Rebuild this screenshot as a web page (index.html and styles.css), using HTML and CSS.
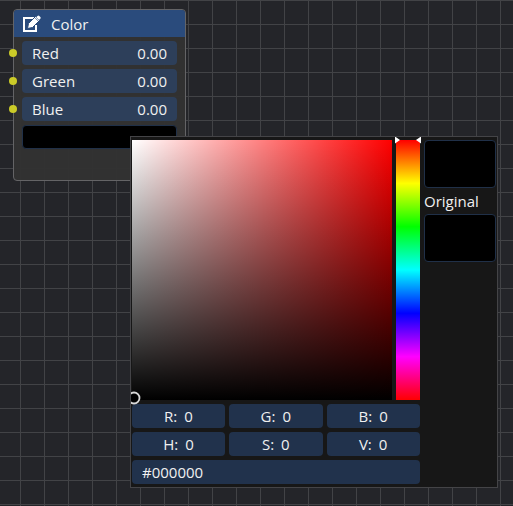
FILE: index.html
```html
<!DOCTYPE html>
<html lang="en">
<head>
<meta charset="utf-8">
<title>Color node</title>
<link rel="stylesheet" href="styles.css">
</head>
<body>
<main class="canvas">
  <section class="node">
    <header class="node-header">
      <svg class="node-icon" viewBox="0 0 18 18" aria-hidden="true">
        <path d="M11 3H1V16H13V10" fill="none" stroke="#fff" stroke-width="2"/>
        <path d="M4.500 13.500l1-5 7-7 4 4-7 7z" fill="#fff" stroke="#2a4b7c" stroke-width="1"/>
        <path d="M13.200 2.200l1.300-1.300q.9-.8 1.800 0l1 1q.8.9 0 1.800L16 5z" fill="#fff"/>
        <path d="M12 2.800l3.200 3.200" stroke="#2a4b7c" stroke-width=".7"/>
      </svg>
      <h1 class="node-title">Color</h1>
    </header>
    <div class="node-body">
      <div class="channel"><i class="port"></i><label for="red">Red</label><input id="red" value="0.00"></div>
      <div class="channel"><i class="port"></i><label for="green">Green</label><input id="green" value="0.00"></div>
      <div class="channel"><i class="port"></i><label for="blue">Blue</label><input id="blue" value="0.00"></div>
      <button class="swatch node-swatch" type="button" aria-label="Pick color"></button>
    </div>
  </section>

  <section class="picker">
    <div class="controls">
      <div class="spectrum">
        <div class="shade">
          <svg class="cursor" viewBox="0 0 14 14" aria-hidden="true">
            <circle cx="7" cy="7" r="5.500" fill="#000" stroke="#d8d8d8" stroke-width="1.800"/>
          </svg>
        </div>
        <div class="hue">
          <input class="hue-slider" type="range" min="0" max="360" value="0" aria-label="Hue">
          <svg class="hue-arrows" viewBox="0 0 26 8" aria-hidden="true">
            <path d="M0 .5L5 4 0 7.500zM26 .5L21 4l5 3.500z" fill="#fff"/>
          </svg>
        </div>
      </div>
      <div class="values">
        <div class="value"><label for="r">R:</label><input id="r" value="0"></div>
        <div class="value"><label for="g">G:</label><input id="g" value="0"></div>
        <div class="value"><label for="b">B:</label><input id="b" value="0"></div>
        <div class="value"><label for="h">H:</label><input id="h" value="0"></div>
        <div class="value"><label for="s">S:</label><input id="s" value="0"></div>
        <div class="value"><label for="v">V:</label><input id="v" value="0"></div>
      </div>
      <input class="hex" value="#000000" aria-label="Hex color">
    </div>
    <div class="compare">
      <button class="swatch large-swatch" type="button" aria-label="Current color"></button>
      <span class="original-label">Original</span>
      <button class="swatch large-swatch" type="button" aria-label="Original color"></button>
    </div>
  </section>
</main>
</body>
</html>
```

FILE: styles.css
```css
* { box-sizing: border-box; }

body {
  margin: 0;
  font: 15px/24px "Open Sans", "Noto Sans", sans-serif;
  color: #f0f0f0;
}

input, button {
  margin: 0;
  padding: 0;
  border: 0;
  background: none;
  color: inherit;
  font: inherit;
  outline: 0;
}

.canvas {
  position: relative;
  min-height: 100vh;
  overflow: hidden;
  background-color: #242529;
  background-image:
    linear-gradient(#424346 1px, transparent 1px),
    linear-gradient(90deg, #424346 1px, transparent 1px);
  background-size: 24px 24px;
  background-position: 0 0, 20px 0;
}

.node {
  position: absolute;
  left: 13px;
  top: 9px;
  width: 173px;
  border: 1px solid #646466;
  border-radius: 4px;
  background: rgba(50, 50, 50, 0.97);
}

.node-header {
  display: flex;
  align-items: center;
  gap: 10px;
  height: 27px;
  padding-left: 9px;
  border-radius: 3px 3px 0 0;
  background: #2a4b7c;
}

.node-icon { width: 18px; height: 18px; }

.node-title {
  margin: 0;
  font-size: 15px;
  font-weight: 400;
}

.node-body {
  display: grid;
  gap: 4px;
  padding: 4px 8px 31px;
}

.channel {
  position: relative;
  display: flex;
  justify-content: space-between;
  height: 24px;
  padding: 0 10px;
  border-radius: 4px;
  background: #2d3f5a;
}

.channel input {
  width: 60px;
  height: 24px;
  text-align: right;
}

.port {
  position: absolute;
  left: -13px;
  top: 8px;
  width: 8px;
  height: 8px;
  border-radius: 50%;
  background: #cbcb28;
}

.swatch {
  border: 1px solid #203048;
  border-radius: 4px;
  background: #000;
}

.node-swatch { height: 24px; }

.picker {
  position: absolute;
  left: 130px;
  top: 136px;
  display: flex;
  gap: 4px;
  padding: 3px 1px;
  border: 1px solid #444447;
  background: #171717;
  overflow: hidden;
}

.controls {
  display: grid;
  gap: 4px;
}

.spectrum {
  display: flex;
  gap: 4px;
}

.shade {
  position: relative;
  width: 260px;
  height: 260px;
  background:
    linear-gradient(transparent, #000),
    linear-gradient(90deg, #fff, #f00);
}

.cursor {
  position: absolute;
  left: -5px;
  bottom: -5px;
  width: 14px;
  height: 14px;
}

.hue {
  position: relative;
  width: 24px;
}

.hue-slider {
  display: block;
  width: 24px;
  height: 260px;
  appearance: none;
  writing-mode: vertical-lr;
  background: linear-gradient(#f00, #ff0, #0f0, #0ff, #00f, #f0f, #f00);
}

.hue-slider::-webkit-slider-thumb {
  appearance: none;
  width: 24px;
  height: 8px;
}

.hue-arrows {
  position: absolute;
  left: -1px;
  top: -4px;
  width: 26px;
  height: 8px;
}

.values {
  display: grid;
  grid-template-columns: repeat(3, 1fr);
  gap: 4px;
}

.value {
  display: flex;
  justify-content: center;
  gap: 7px;
  height: 24px;
  border-radius: 4px;
  background: #21324c;
}

.value input {
  width: 9px;
  height: 24px;
}

.hex {
  width: 100%;
  height: 24px;
  padding: 0 10px;
  border-radius: 4px;
  background: #21324c;
}

.compare {
  display: flex;
  flex-direction: column;
  width: 72px;
}

.large-swatch { height: 48px; }

.original-label { margin: 1px 0; }
```
